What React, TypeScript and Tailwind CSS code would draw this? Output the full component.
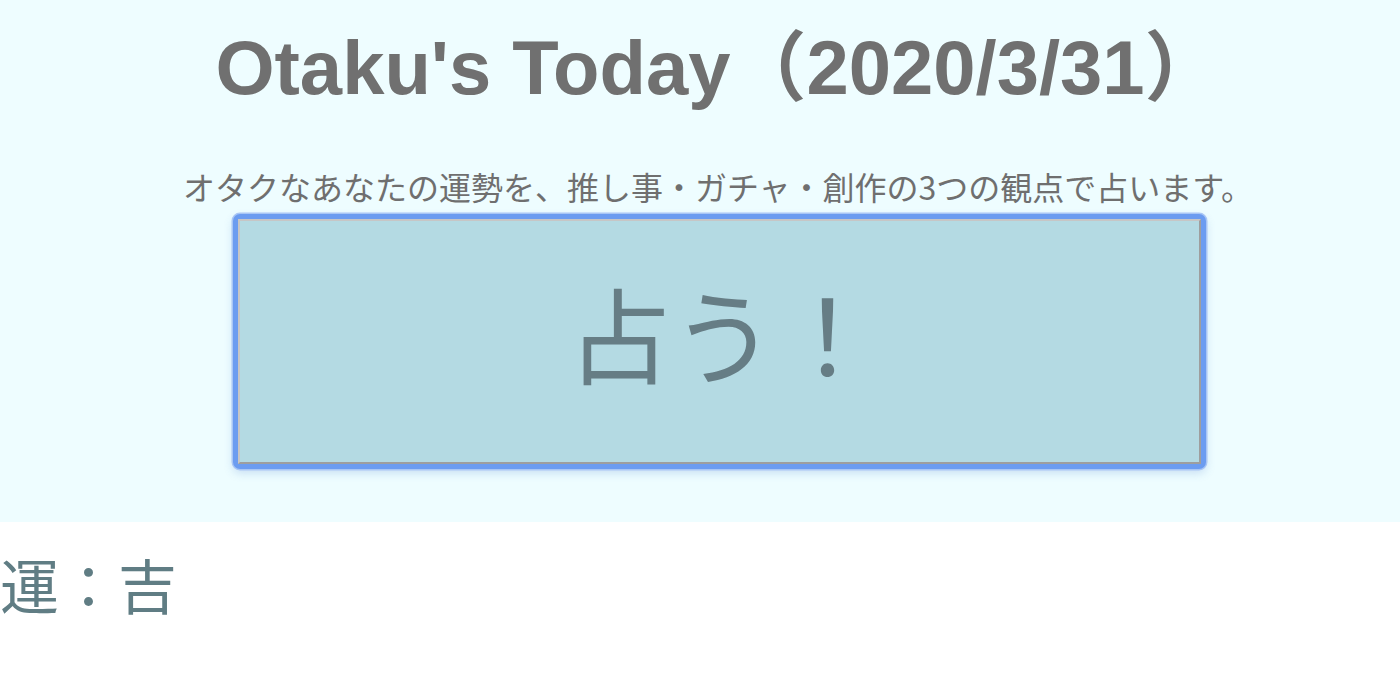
export default function App() {
  return (
    <div className="min-h-screen bg-white">
      <section className="bg-[#eefdff] pt-[28px] pb-[53px] flex flex-col items-center">
        <h1 className="ml-[36px] text-[76px] leading-[80px] font-bold text-[#707070] [font-family:'Liberation_Sans','Noto_Sans_CJK_JP',sans-serif]">
          Otaku's Today（2020/3/31）
        </h1>
        <p className="mt-[58px] ml-[36px] text-[32px] leading-[40px] text-[#6f6f6f] [font-family:'Noto_Sans_CJK_JP',sans-serif]">
          オタクなあなたの運勢を、推し事・ガチャ・創作の3つの観点で占います。
        </p>
        <div className="mt-[8px] ml-[39px] p-[5px] rounded-[7px] bg-[#6c9cf0] shadow-[0_0_0_1.5px_#a9c6f5,0_4px_10px_rgba(60,110,200,0.22)]">
          <button className="block w-[963px] h-[245px] pb-[20px] pl-[8px] bg-[#b4dae3] border-2 border-t-[#c6c6c6] border-l-[#c6c6c6] border-b-[#9e9e9e] border-r-[#9e9e9e] text-[104px] leading-none text-[#667d85] [font-family:'Noto_Sans_CJK_JP',sans-serif]">
            占う！
          </button>
        </div>
      </section>
      <div className="mt-[22px] text-[59px] leading-[80px] text-[#607d84] [font-family:'Noto_Sans_CJK_JP',sans-serif]">
        運：吉
      </div>
    </div>
  )
}
